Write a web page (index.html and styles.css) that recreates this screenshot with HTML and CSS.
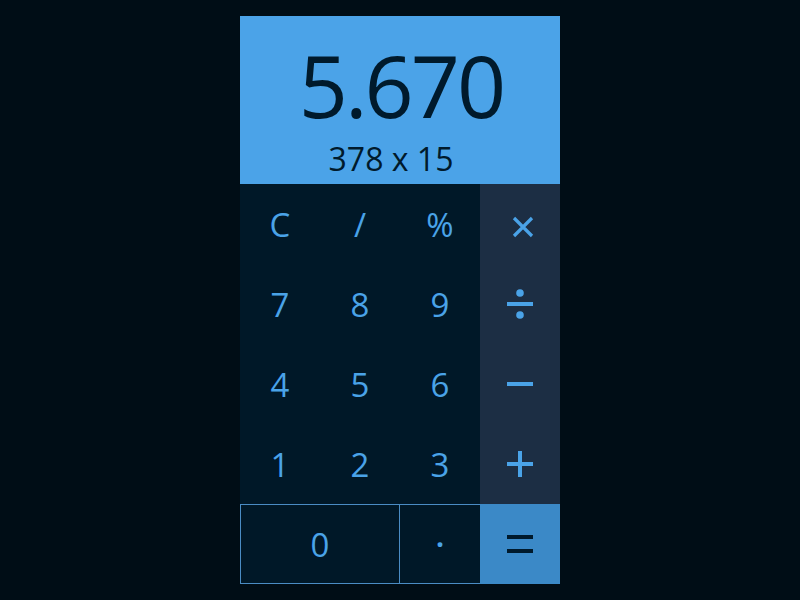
FILE: index.html
```html
<!DOCTYPE html>
<html>
<head>
<meta charset="utf-8">
<link rel="stylesheet" href="styles.css">
</head>
<body>
<div class="calc">
  <div class="display">
    <div class="result">5.670</div>
    <div class="expr">378 x 15</div>
  </div>
  <div class="keys">
    <div class="key">C</div>
    <div class="key">/</div>
    <div class="key">%</div>
    <div class="key op" aria-label="×"><svg class="times" width="22" height="22" viewBox="0 0 22 22"><path d="M2 2L20 20M20 2L2 20" stroke="#4aa3e8" stroke-width="3.2" fill="none"/></svg></div>
    <div class="key">7</div>
    <div class="key">8</div>
    <div class="key">9</div>
    <div class="key op" aria-label="÷"><svg width="26" height="30" viewBox="0 0 26 30"><circle cx="13" cy="4" r="3.8" fill="#4aa3e8"/><rect x="0" y="13" width="26" height="4" fill="#4aa3e8"/><circle cx="13" cy="26" r="3.8" fill="#4aa3e8"/></svg></div>
    <div class="key">4</div>
    <div class="key">5</div>
    <div class="key">6</div>
    <div class="key op" aria-label="−"><svg width="26" height="4" viewBox="0 0 26 4"><rect width="26" height="4" fill="#4aa3e8"/></svg></div>
    <div class="key">1</div>
    <div class="key">2</div>
    <div class="key">3</div>
    <div class="key op" aria-label="+"><svg width="26" height="26" viewBox="0 0 26 26"><rect x="0" y="11" width="26" height="4" fill="#4aa3e8"/><rect x="11" y="0" width="4" height="26" fill="#4aa3e8"/></svg></div>
    <div class="key zero">0</div>
    <div class="key dot">·</div>
    <div class="key eq" aria-label="="><svg width="26" height="18" viewBox="0 0 26 18"><rect x="0" y="0" width="26" height="4" fill="#001a2c"/><rect x="0" y="14" width="26" height="4" fill="#001a2c"/></svg></div>
  </div>
</div>
</body>
</html>
```
FILE: styles.css
```css
html, body {
  margin: 0;
  padding: 0;
  background: #000d16;
}
body {
  font-family: "Open Sans", "Noto Sans", sans-serif;
  padding-top: 16px;
}
.calc {
  width: 320px;
  margin: 0 auto;
}
.display {
  height: 168px;
  background: #4ba3e8;
  color: #001a2c;
  display: flex;
  flex-direction: column;
  align-items: center;
  box-sizing: border-box;
  padding-top: 21px;
}
.result {
  font-size: 86px;
  line-height: 96px;
  letter-spacing: -3px;
  margin-left: 2px;
}
.expr {
  font-size: 32px;
  line-height: 40px;
  margin-top: 6px;
  margin-right: 18px;
}
.keys {
  display: grid;
  grid-template-columns: repeat(4, 80px);
  grid-auto-rows: 80px;
  background: #001828;
}
.key {
  display: flex;
  align-items: center;
  justify-content: center;
  color: #4aa3e8;
  font-size: 33px;
  box-sizing: border-box;
}
.op {
  background: #1c2e44;
}
.times {
  margin: 6px 0 0 6px;
}
.zero {
  grid-column: span 2;
  border: 1px solid #4a8cc4;
}
.dot {
  border-top: 1px solid #4a8cc4;
  border-bottom: 1px solid #4a8cc4;
  font-size: 28px;
  font-weight: bold;
}
.eq {
  background: #3b89c7;
}
```
